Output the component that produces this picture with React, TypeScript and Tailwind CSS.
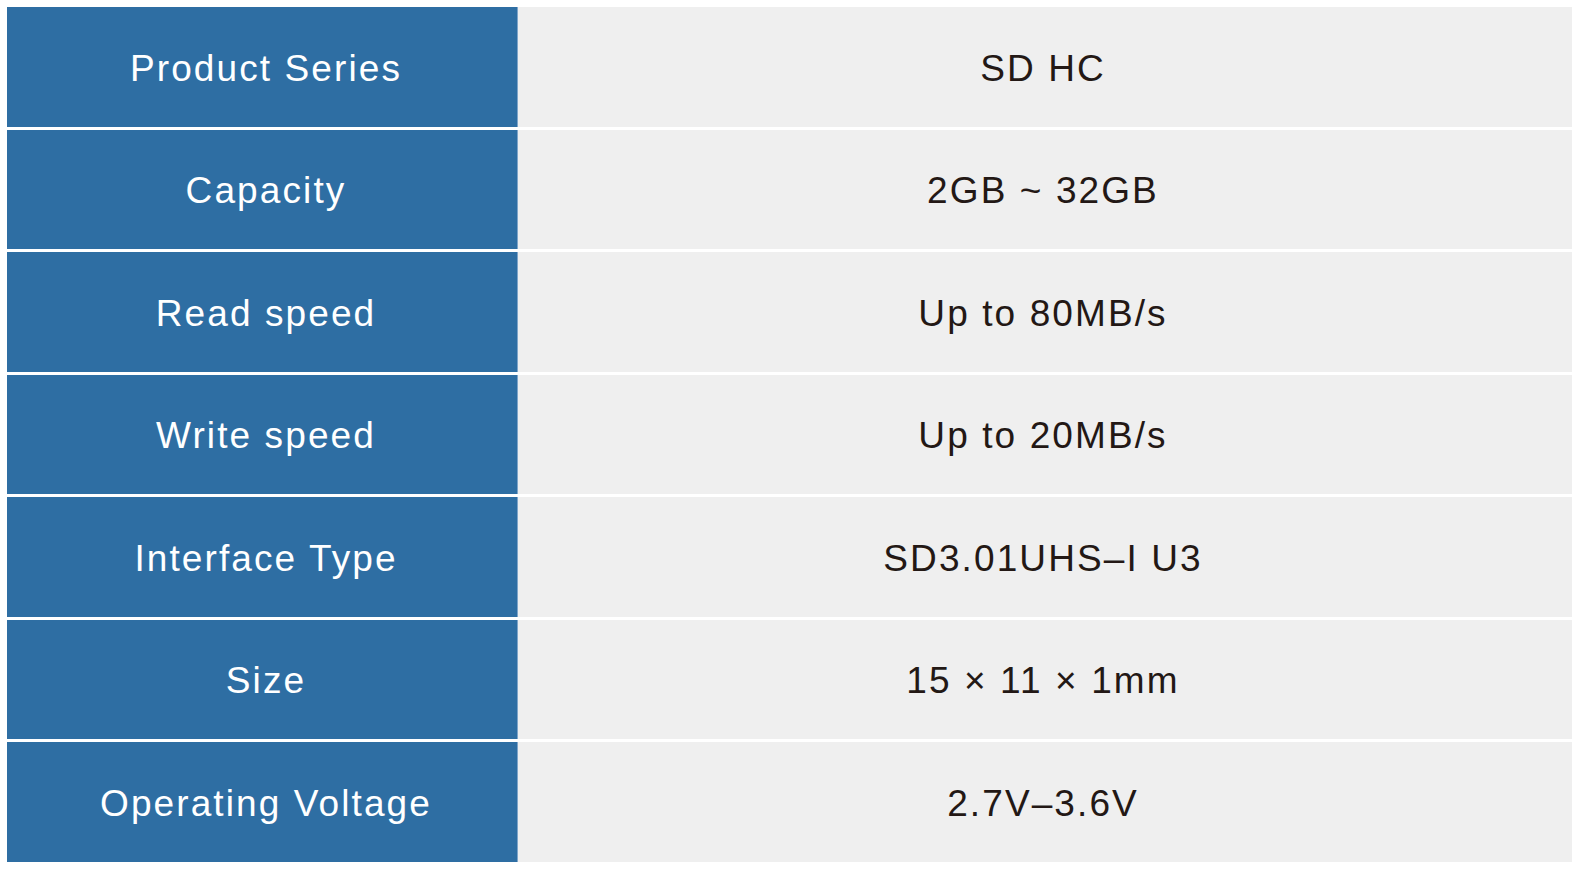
const specs: [string, string][] = [
  ["Product Series", "SD HC"],
  ["Capacity", "2GB ~ 32GB"],
  ["Read speed", "Up to 80MB/s"],
  ["Write speed", "Up to 20MB/s"],
  ["Interface Type", "SD3.01UHS–I U3"],
  ["Size", "15 × 11 × 1mm"],
  ["Operating Voltage", "2.7V–3.6V"],
];

export default function App() {
  return (
    <div className="min-h-screen bg-white px-[7px] pt-[7px] font-['Liberation_Sans',Arial,sans-serif]">
      <div className="flex w-[1565px] flex-col gap-y-[3px]">
        {specs.map(([label, value]) => (
          <div key={label} className="flex h-[119.5px]">
            <div className="flex w-[511px] items-center justify-center border-r border-[#7fa5c9] bg-[#2e6ea3] pl-[8px] pt-[3px] text-[37px] tracking-[2.1px] text-white">
              {label}
            </div>
            <div className="flex flex-1 items-center justify-center bg-[#efefef] pr-[4px] pt-[3px] text-[37px] tracking-[2.1px] text-[#231815]">
              {value}
            </div>
          </div>
        ))}
      </div>
    </div>
  );
}
